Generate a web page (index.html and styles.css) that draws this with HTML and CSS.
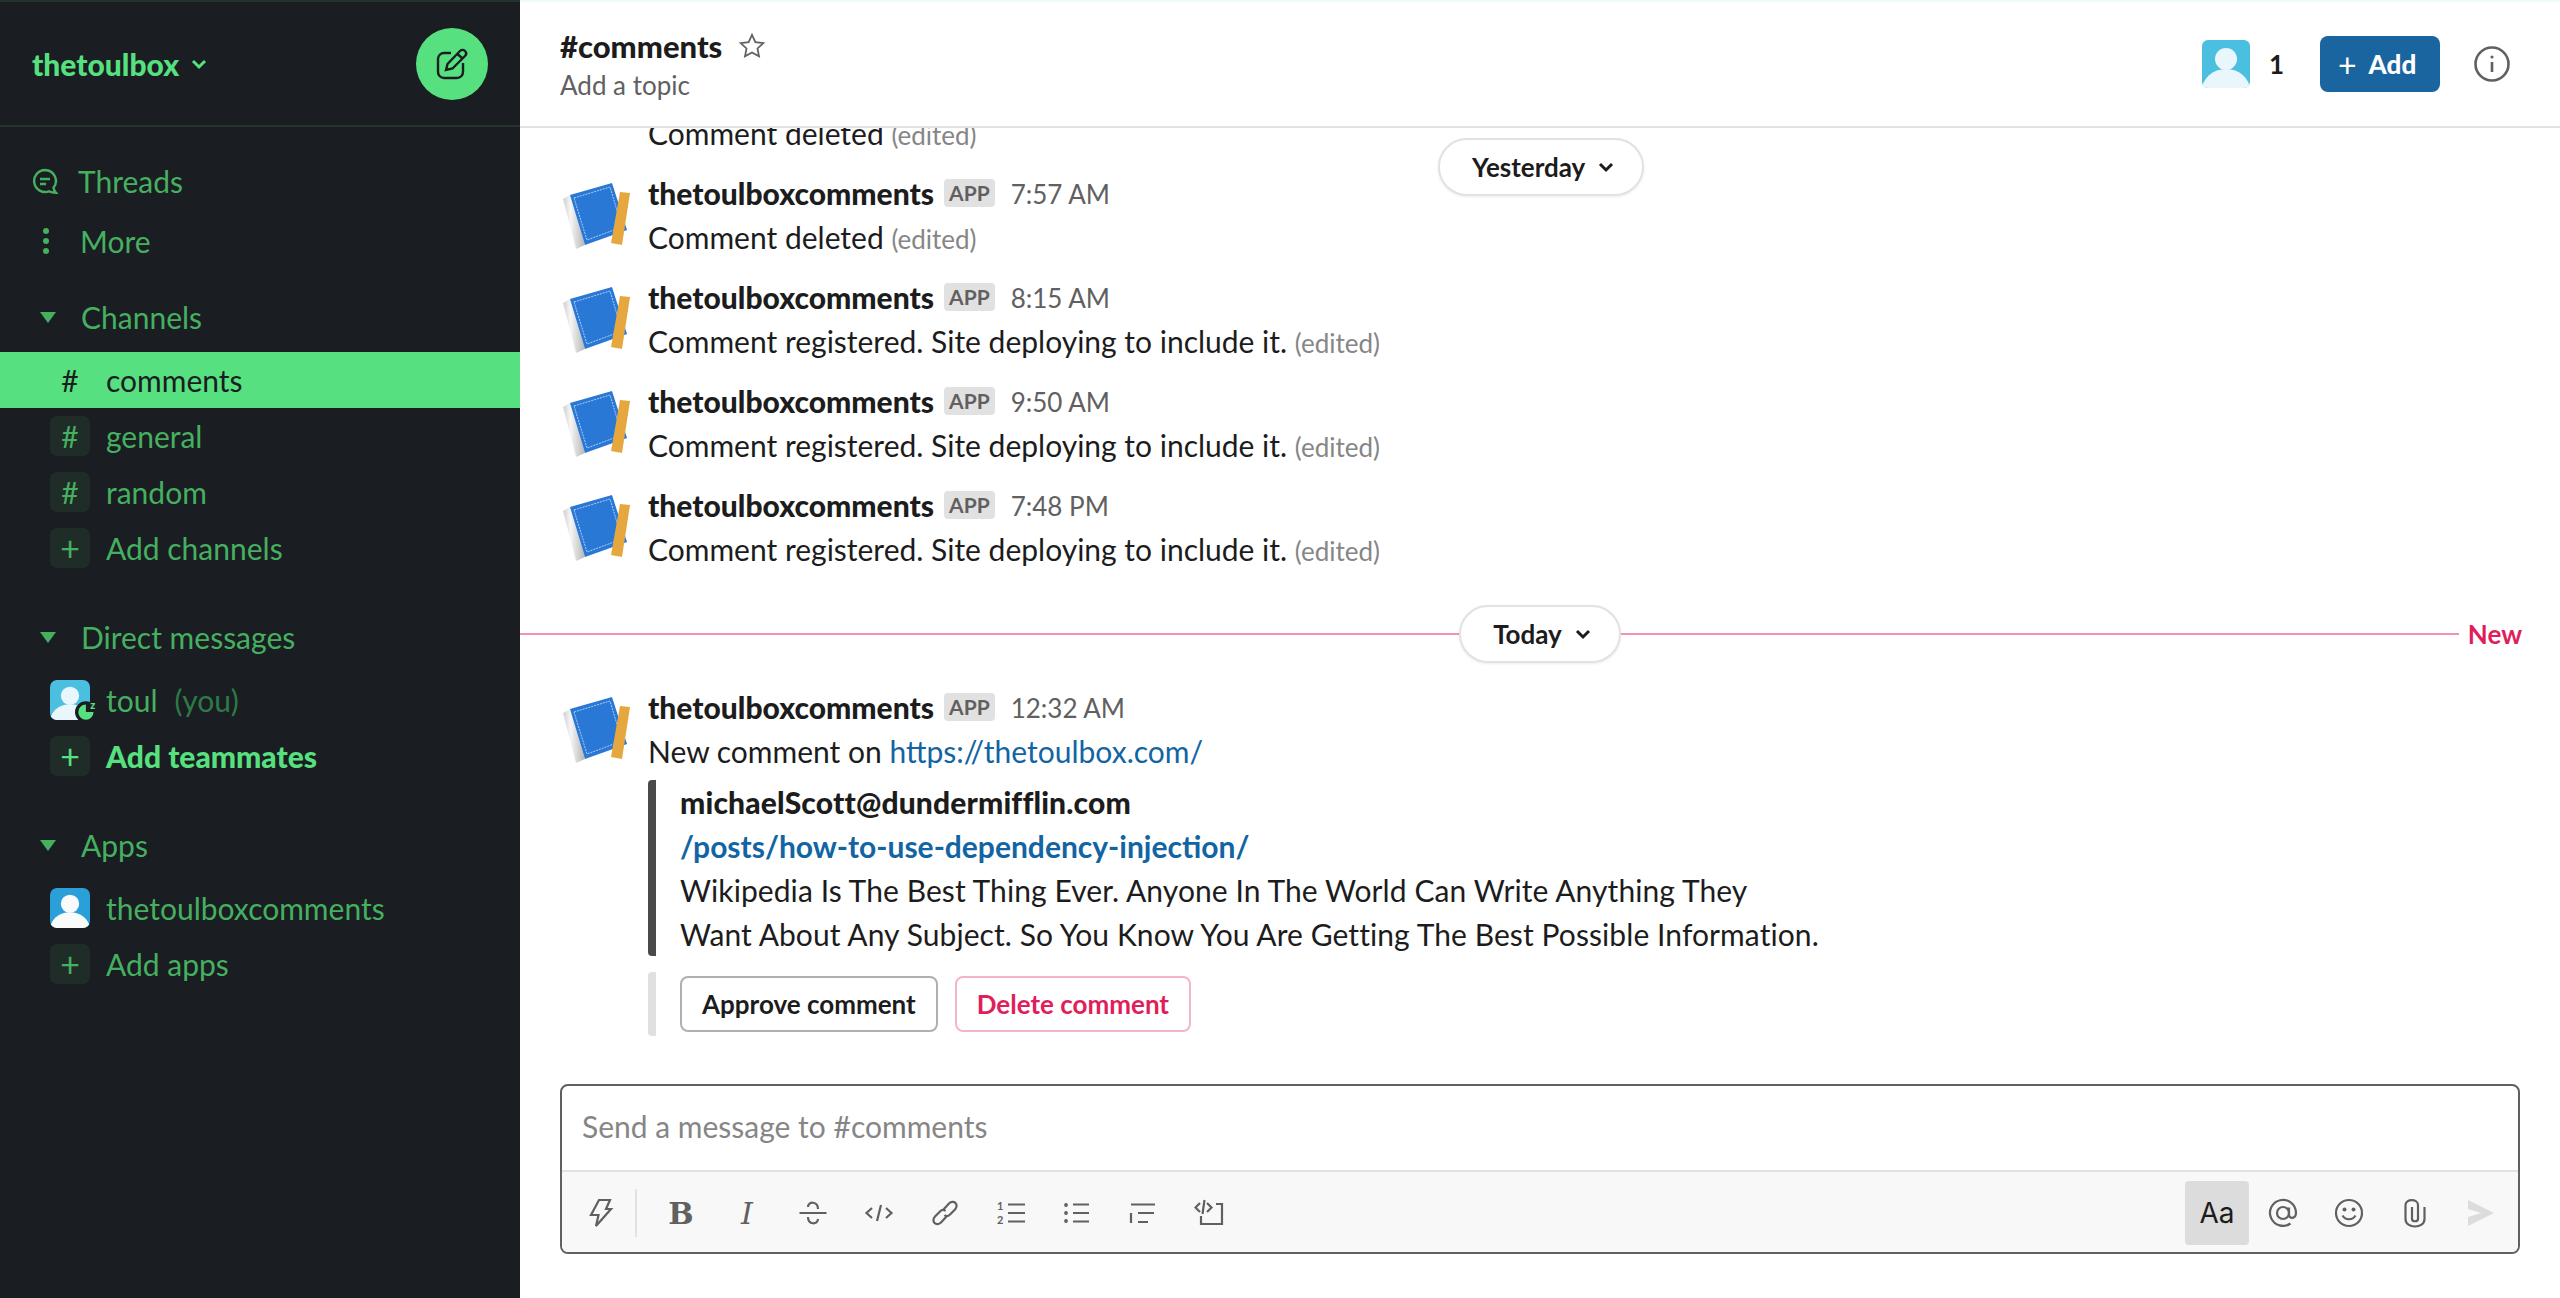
FILE: index.html
```html
<!DOCTYPE html>
<html lang="en">
<head>
    <meta charset="UTF-8">
    <title>comments - thetoulbox</title>
    <link rel="stylesheet" href="styles.css">
</head>
<body>
    <svg class="sprites" width="0" height="0">
        <defs>
            <linearGradient id="paper" x1="0" y1="0" x2="1" y2="0">
                <stop offset="0" stop-color="#cfcfcf"/>
                <stop offset=".35" stop-color="#f6f6f6"/>
                <stop offset="1" stop-color="#b4b4b4"/>
            </linearGradient>
            <symbol id="book" viewBox="0 0 72 72">
                <polygon points="3,21 10,17 25,67 16,71" fill="url(#paper)"/>
                <polygon points="10,17 52,5 67,52 25,67" fill="#2a78d6"/>
                <polygon points="14,20 50,9 62,49 27,62" fill="none" stroke="#cfe2fa" stroke-width="0.8" stroke-dasharray="2 1"/>
                <polygon points="60,14 70,15 62,67 51,65" fill="#e6a83e"/>
            </symbol>
            <symbol id="person" viewBox="0 0 48 48">
                <circle cx="24" cy="19" r="11"/>
                <ellipse cx="24" cy="50" rx="24" ry="21"/>
            </symbol>
        </defs>
    </svg>

    <div class="app">
        <aside class="sidebar">
            <header class="team">
                <span class="team-name">thetoulbox</span>
                <svg class="team-chevron" viewBox="0 0 16 16"><path d="M2 5l6 6 6-6"/></svg>
                <button class="compose">
                    <svg viewBox="0 0 32 32"><path d="M15 5H8a6 6 0 0 0-6 6v13a6 6 0 0 0 6 6h13a6 6 0 0 0 6-6v-9"/><path d="M10 22l1.500-6L24 3c1.500-1.500 3.500-1.500 5 0s1.500 3.500 0 5L16.500 20.500zM21.500 6l5 4.500"/></svg>
                </button>
            </header>

            <nav class="nav">
                <div class="nav-top">
                    <svg class="threads-icon" viewBox="0 0 26 26"><path d="M13 2a11 11 0 1 0 4 21.300c2 1 4 1.500 7 1.500-1.500-1.500-2.200-3-2.500-5A11 11 0 0 0 13 2z"/><path d="M8 11h10M8 16h6"/></svg>
                    <span class="threads-label">Threads</span>
                </div>
                <div class="nav-top">
                    <span class="more-dots"><i></i><i></i><i></i></span>
                    <span class="more-label">More</span>
                </div>

                <div class="section-head"><span class="caret"></span>Channels</div>
                <div class="row active"><span class="row-icon">#</span>comments</div>
                <div class="row"><span class="row-icon boxed">#</span>general</div>
                <div class="row"><span class="row-icon boxed">#</span>random</div>
                <div class="row"><span class="row-icon boxed plus">+</span>Add channels</div>

                <div class="section-head"><span class="caret"></span>Direct messages</div>
                <div class="row">
                    <span class="row-icon avatar-dm">
                        <svg class="person person-light" viewBox="0 0 48 48"><use href="#person"/></svg>
                        <svg class="presence" viewBox="0 0 22 22"><circle cx="10" cy="12" r="10" fill="#1a1d21"/><path d="M10 12V5a7 7 0 1 0 7 7z" fill="#57e07f"/><text x="14" y="9" class="presence-z">z</text></svg>
                    </span>
                    toul<span class="you">(you)</span>
                </div>
                <div class="row strong"><span class="row-icon boxed plus">+</span>Add teammates</div>

                <div class="section-head"><span class="caret"></span>Apps</div>
                <div class="row">
                    <span class="row-icon"><svg class="person person-app" viewBox="0 0 48 48"><use href="#person"/></svg></span>
                    thetoulboxcomments
                </div>
                <div class="row"><span class="row-icon boxed plus">+</span>Add apps</div>
            </nav>
        </aside>

        <main class="main">
            <header class="channel-head">
                <div class="channel-info">
                    <div class="channel-title">
                        <span>#comments</span>
                        <svg class="star" viewBox="0 0 24 24"><path d="M12 2.500l2.900 6.200 6.800.8-5 4.600 1.300 6.700-6-3.300-6 3.300 1.300-6.700-5-4.600 6.800-.8z"/></svg>
                    </div>
                    <div class="channel-topic">Add a topic</div>
                </div>
                <div class="channel-actions">
                    <svg class="person person-head" viewBox="0 0 48 48"><use href="#person"/></svg>
                    <span class="member-count">1</span>
                    <button class="add-btn"><span class="add-plus">+</span>Add</button>
                    <svg class="info" viewBox="0 0 36 36"><circle cx="18" cy="18" r="16.500"/><path d="M18 16v10"/><circle class="info-dot" cx="18" cy="11" r="1.600"/></svg>
                </div>
            </header>

            <section class="messages">
                <button class="day-pill day-sticky">Yesterday<svg viewBox="0 0 16 16"><path d="M2 5l6 6 6-6"/></svg></button>

                <div class="cut-line">Comment deleted <span class="edited">(edited)</span></div>

                <article class="message">
                    <svg class="msg-avatar"><use href="#book"/></svg>
                    <div class="msg-body">
                        <div class="msg-head"><span class="msg-name">thetoulboxcomments</span><span class="app-tag">APP</span><span class="msg-time">7:57 AM</span></div>
                        <div>Comment deleted <span class="edited">(edited)</span></div>
                    </div>
                </article>
                <article class="message">
                    <svg class="msg-avatar"><use href="#book"/></svg>
                    <div class="msg-body">
                        <div class="msg-head"><span class="msg-name">thetoulboxcomments</span><span class="app-tag">APP</span><span class="msg-time">8:15 AM</span></div>
                        <div>Comment registered. Site deploying to include it. <span class="edited">(edited)</span></div>
                    </div>
                </article>
                <article class="message">
                    <svg class="msg-avatar"><use href="#book"/></svg>
                    <div class="msg-body">
                        <div class="msg-head"><span class="msg-name">thetoulboxcomments</span><span class="app-tag">APP</span><span class="msg-time">9:50 AM</span></div>
                        <div>Comment registered. Site deploying to include it. <span class="edited">(edited)</span></div>
                    </div>
                </article>
                <article class="message">
                    <svg class="msg-avatar"><use href="#book"/></svg>
                    <div class="msg-body">
                        <div class="msg-head"><span class="msg-name">thetoulboxcomments</span><span class="app-tag">APP</span><span class="msg-time">7:48 PM</span></div>
                        <div>Comment registered. Site deploying to include it. <span class="edited">(edited)</span></div>
                    </div>
                </article>

                <div class="today-divider">
                    <span class="divider-line"></span>
                    <button class="day-pill">Today<svg viewBox="0 0 16 16"><path d="M2 5l6 6 6-6"/></svg></button>
                    <div class="divider-right">
                        <span class="divider-line"></span>
                        <span class="new-label">New</span>
                    </div>
                </div>

                <article class="message">
                    <svg class="msg-avatar"><use href="#book"/></svg>
                    <div class="msg-body">
                        <div class="msg-head"><span class="msg-name">thetoulboxcomments</span><span class="app-tag">APP</span><span class="msg-time">12:32 AM</span></div>
                        <div>New comment on <a class="link" href="#">https://thetoulbox.com/</a></div>
                        <div class="attachment">
                            <div class="msg-name att-author">michaelScott@dundermifflin.com</div>
                            <div class="link post-link">/posts/how-to-use-dependency-injection/</div>
                            <div class="att-text">Wikipedia Is The Best Thing Ever. Anyone In The World Can Write Anything They</div>
                            <div class="att-text">Want About Any Subject. So You Know You Are Getting The Best Possible Information.</div>
                        </div>
                        <div class="attachment-actions">
                            <button class="action-btn">Approve comment</button>
                            <button class="action-btn danger">Delete comment</button>
                        </div>
                    </div>
                </article>
            </section>

            <section class="composer">
                <div class="composer-input">Send a message to #comments</div>
                <div class="composer-tools">
                    <button class="tool"><svg viewBox="0 0 30 30"><path d="M13 2h11l-4 9h5L10 28l2.500-11H5z"/></svg></button>
                    <span class="tool-sep"></span>
                    <button class="tool tool-b">B</button>
                    <button class="tool tool-i">I</button>
                    <button class="tool"><svg viewBox="0 0 30 30"><path d="M1.500 15h27M20 11c0-8-10-8-10-2M10 19c0 8 10 8 10 2"/></svg></button>
                    <button class="tool"><svg viewBox="0 0 30 30"><path d="M8 10l-5.500 5L8 20M22 10l5.500 5L22 20M17 7l-4 16"/></svg></button>
                    <button class="tool"><svg viewBox="0 0 30 30"><path d="M13 12l6-6.500c2-2 5-2 6.500-.5s1.500 4.500-.5 6.500l-5 5c-2 2-4 2-5.500.5M17 18l-6 6.500c-2 2-5 2-6.500.5s-1.500-4.500.5-6.500l5-5c2-2 4-2 5.500-.5"/></svg></button>
                    <button class="tool"><svg viewBox="0 0 30 30"><path d="M12 6.500h17M12 15h17M12 23.500h17"/><text x="1" y="12" class="list-num">1</text><text x="1" y="26" class="list-num">2</text></svg></button>
                    <button class="tool"><svg viewBox="0 0 30 30"><path d="M11 6.500h16M11 15h16M11 23.500h16"/><circle class="tool-dot" cx="4" cy="7" r="1.900"/><circle class="tool-dot" cx="4" cy="15" r="1.900"/><circle class="tool-dot" cx="4" cy="23" r="1.900"/></svg></button>
                    <button class="tool"><svg viewBox="0 0 30 30"><path d="M3 6.500h24M10 15h16M10 24h10M3 15v10"/></svg></button>
                    <button class="tool"><svg viewBox="0 0 30 30"><path d="M6 5L1.500 9.500 6 14M13 5l4.500 4.500L13 14M10.500 2l-2 14M22 6h6v20H7v-8"/></svg></button>
                    <span class="tools-gap"></span>
                    <button class="tool tool-aa">Aa</button>
                    <button class="tool"><svg viewBox="0 0 30 30"><circle cx="15" cy="15" r="6"/><path d="M21 9.500v7c0 5 7 4.500 7-2a13 13 0 1 0-5.500 11"/></svg></button>
                    <button class="tool"><svg viewBox="0 0 30 30"><circle cx="15" cy="15" r="13"/><path d="M8.500 17.500c3 5 10 5 13 0"/><circle class="tool-dot" cx="10.500" cy="11.500" r="2"/><circle class="tool-dot" cx="19.500" cy="11.500" r="2"/></svg></button>
                    <button class="tool"><svg viewBox="0 0 30 30"><path d="M12 9v12c0 3 6 3 6 0V7c0-6.500-12.500-6.500-12.500 0v14c0 10 19 10 19 0V9"/></svg></button>
                    <button class="tool"><svg viewBox="0 0 30 30"><path class="send" d="M2 2l26 13L2 28v-9l13-4-13-4z"/></svg></button>
                </div>
            </section>
        </main>
    </div>
</body>
</html>
```

FILE: styles.css
```css
* {
  box-sizing: border-box;
}

html, body {
  height: 100%;
}

body {
  margin: 0;
  font-family: Lato, "Noto Sans", sans-serif;
  font-size: 30px;
  line-height: 44px;
  color: #1d1c1d;
  background-color: #fff;
  overflow: hidden;
}

button {
  font-family: inherit;
  cursor: pointer;
}

.sprites {
  position: absolute;
}

.app {
  display: flex;
  height: 100vh;
}

/* sidebar */
.sidebar {
  flex: 0 0 520px;
  background-color: #1a1d21;
  border-top: 2px solid #24332c;
  color: #45b060;
}

.team {
  display: flex;
  align-items: center;
  height: 125px;
  padding: 0 32px;
  border-bottom: 2px solid #24332c;
}

.team-name {
  font-weight: 900;
  color: #57e07f;
}

.team-chevron {
  width: 16px;
  height: 16px;
  margin-left: 12px;
  fill: none;
  stroke: #57e07f;
  stroke-width: 3;
}

.compose {
  display: flex;
  align-items: center;
  justify-content: center;
  width: 72px;
  height: 72px;
  margin-left: auto;
  padding: 0;
  border: 0;
  border-radius: 50%;
  background-color: #57e07f;
}

.compose svg {
  width: 32px;
  height: 32px;
  fill: none;
  stroke: #1a1d21;
  stroke-width: 2.400;
}

.nav {
  padding-top: 24px;
}

.nav-top {
  display: flex;
  align-items: center;
  height: 60px;
  padding-left: 32px;
}

.threads-icon {
  width: 26px;
  height: 26px;
  fill: none;
  stroke: #45b060;
  stroke-width: 2.400;
}

.threads-label {
  margin-left: 20px;
}

.more-dots {
  display: flex;
  flex-direction: column;
  gap: 4px;
  width: 28px;
  padding-left: 11px;
}

.more-dots i {
  width: 6px;
  height: 6px;
  border-radius: 50%;
  background-color: #45b060;
}

.more-label {
  margin-left: 20px;
}

.section-head {
  display: flex;
  align-items: center;
  height: 56px;
  margin: 33px 0 7px;
  padding-left: 40px;
}

.nav-top + .section-head {
  margin-top: 18px;
}

.caret {
  width: 0;
  height: 0;
  margin-right: 25px;
  border-left: 8px solid transparent;
  border-right: 8px solid transparent;
  border-top: 11px solid #45b060;
}

.row {
  display: flex;
  align-items: center;
  height: 56px;
  padding-left: 50px;
}

.row.active {
  background-color: #57e07f;
  color: #1a1d21;
}

.row.strong {
  font-weight: 900;
  color: #57e07f;
}

.row-icon {
  position: relative;
  display: flex;
  align-items: center;
  justify-content: center;
  flex: 0 0 40px;
  width: 40px;
  height: 40px;
  margin-right: 16px;
  font-weight: 400;
  line-height: 1;
}

.row-icon.boxed {
  border-radius: 7px;
  background-color: #202c27;
}

.row-icon.plus {
  font-size: 34px;
}

.you {
  margin-left: 17px;
  color: #2d7a46;
}

.person {
  display: block;
}

.person-light,
.person-app {
  width: 40px;
  height: 40px;
  border-radius: 7px;
}

.person-light {
  background-color: #4bbfe0;
  fill: #e9f6fb;
}

.person-app {
  background-color: #2a9fd8;
  fill: #fafafa;
}

.person-head {
  width: 48px;
  height: 48px;
  border-radius: 6px;
  background-color: #4bbfe0;
  fill: #e9f6fb;
}

.presence {
  position: absolute;
  right: -9px;
  bottom: -3px;
  width: 24px;
  height: 24px;
}

.presence-z {
  font-size: 10px;
  font-weight: 900;
  fill: #57e07f;
}

/* main column */
.main {
  display: flex;
  flex-direction: column;
  flex: 1;
  min-width: 0;
  border-top: 2px solid #eefaf2;
}

.channel-head {
  display: flex;
  align-items: center;
  flex: 0 0 126px;
  padding: 3px 50px 0 40px;
  border-bottom: 2px solid #e2e2e2;
}

.channel-title {
  display: flex;
  align-items: center;
  font-size: 31px;
  font-weight: 900;
  line-height: 38px;
}

.star {
  width: 28px;
  height: 28px;
  margin-left: 16px;
  fill: none;
  stroke: #616061;
  stroke-width: 1.500;
}

.channel-topic {
  font-size: 26px;
  line-height: 40px;
  color: #616061;
}

.channel-actions {
  display: flex;
  align-items: center;
  margin-left: auto;
  margin-top: -3px;
}

.member-count {
  margin: 0 36px 0 19px;
  font-size: 26px;
  font-weight: 700;
}

.add-btn {
  display: flex;
  align-items: center;
  height: 56px;
  width: 120px;
  padding: 0 0 0 18px;
  border: 0;
  border-radius: 8px;
  background-color: #1a649f;
  color: #fff;
  font-size: 26px;
  font-weight: 900;
}

.add-plus {
  margin-right: 12px;
  font-weight: 400;
  font-size: 32px;
}

.info {
  width: 36px;
  height: 36px;
  margin-left: 34px;
  fill: none;
  stroke: #616061;
  stroke-width: 2.600;
}

.info-dot {
  fill: #616061;
  stroke: none;
}

/* messages */
.messages {
  position: relative;
  flex: 1;
  min-height: 0;
  overflow: hidden;
}

.cut-line {
  margin: -17px 0 0 128px;
}

.edited {
  font-size: 26px;
  line-height: 1;
  color: #868686;
}

.message {
  display: flex;
  padding: 8px 40px;
}

.cut-line + .message {
  margin-top: 8px;
}

.msg-avatar {
  flex: 0 0 72px;
  width: 72px;
  height: 72px;
  margin: 7px 16px 0 0;
}

.msg-body {
  flex: 1;
  min-width: 0;
}

.msg-head {
  display: flex;
  align-items: center;
  height: 44px;
}

.msg-name {
  font-weight: 900;
}

.app-tag {
  margin-left: 10px;
  padding: 0 5px;
  height: 28px;
  border-radius: 4px;
  background-color: #e1e1e1;
  color: #616061;
  font-size: 21px;
  font-weight: 700;
  line-height: 28px;
}

.msg-time {
  margin: 2px 0 0 16px;
  font-size: 26px;
  line-height: 30px;
  color: #616061;
}

.link {
  color: #1264a3;
  text-decoration: none;
}

.post-link {
  font-weight: 700;
}

.attachment {
  margin-top: 7px;
  padding-left: 24px;
  border-left: 8px solid #4a4a4a;
  border-radius: 4px;
}

.att-author {
  letter-spacing: .15px;
}

.att-text {
  letter-spacing: .08px;
}

.attachment-actions {
  display: flex;
  align-items: center;
  gap: 17px;
  height: 64px;
  margin-top: 16px;
  padding-left: 24px;
  border-left: 8px solid #e0e0e0;
  border-radius: 4px;
}

.action-btn {
  height: 56px;
  padding: 0 20px;
  border: 2px solid #b0b0b0;
  border-radius: 8px;
  background-color: #fff;
  color: #1d1c1d;
  font-size: 26px;
  font-weight: 700;
}

.action-btn.danger {
  border-color: #f5b4c9;
  color: #e01e5a;
}

.day-pill {
  display: flex;
  align-items: center;
  height: 58px;
  padding: 0 28px 0 32px;
  border: 2px solid #e2e2e2;
  border-radius: 29px;
  background-color: #fff;
  box-shadow: 0 1px 3px rgba(0, 0, 0, .08);
  color: #1d1c1d;
  font-size: 26px;
  font-weight: 700;
}

.day-pill svg {
  width: 16px;
  height: 16px;
  margin-left: 13px;
  fill: none;
  stroke: #1d1c1d;
  stroke-width: 3;
}

.day-sticky {
  position: absolute;
  top: 10px;
  left: 918px;
  z-index: 1;
}

.today-divider {
  display: grid;
  grid-template-columns: 1fr auto 1fr;
  align-items: center;
  height: 58px;
  margin: 26px 0 14px;
}

.divider-line {
  flex: 1;
  height: 2px;
  background-color: #f291b2;
}

.divider-right {
  display: flex;
  align-items: center;
}

.new-label {
  margin: 0 38px 0 9px;
  color: #e01e5a;
  font-size: 26px;
  font-weight: 700;
}

/* composer */
.composer {
  flex: 0 0 170px;
  margin: 0 40px 44px;
  border: 2px solid #616061;
  border-radius: 8px;
  overflow: hidden;
}

.composer-input {
  height: 84px;
  padding: 0 20px;
  color: #868686;
  line-height: 80px;
}

.composer-tools {
  display: flex;
  align-items: center;
  height: 82px;
  padding: 2px 3px 0 7px;
  border-top: 2px solid #e2e2e2;
  background-color: #f8f8f8;
}

.tool {
  display: flex;
  align-items: center;
  justify-content: center;
  flex: 0 0 64px;
  width: 64px;
  height: 64px;
  margin-right: 2px;
  padding: 0;
  border: 0;
  border-radius: 4px;
  background: none;
  color: #616061;
}

.tool svg {
  width: 30px;
  height: 30px;
  fill: none;
  stroke: #616061;
  stroke-width: 2.200;
}

.tool-b {
  font-family: "DejaVu Serif", serif;
  font-size: 30px;
  font-weight: 700;
}

.tool-i {
  font-family: "DejaVu Serif", serif;
  font-size: 30px;
  font-style: italic;
}

.tool-dot {
  fill: #616061;
  stroke: none;
}

.list-num {
  font-size: 11px;
  font-weight: 700;
  fill: #616061;
  stroke: none;
}

.tool-sep {
  width: 2px;
  height: 48px;
  margin-right: 12px;
  background-color: #e2e2e2;
}

.tools-gap {
  flex: 1;
}

.tool-aa {
  background-color: #dcdcdc;
  color: #1d1c1d;
  font-family: Inter, sans-serif;
  font-size: 28px;
}

.tool svg .send {
  fill: #dcdcdc;
  stroke: none;
}
```
